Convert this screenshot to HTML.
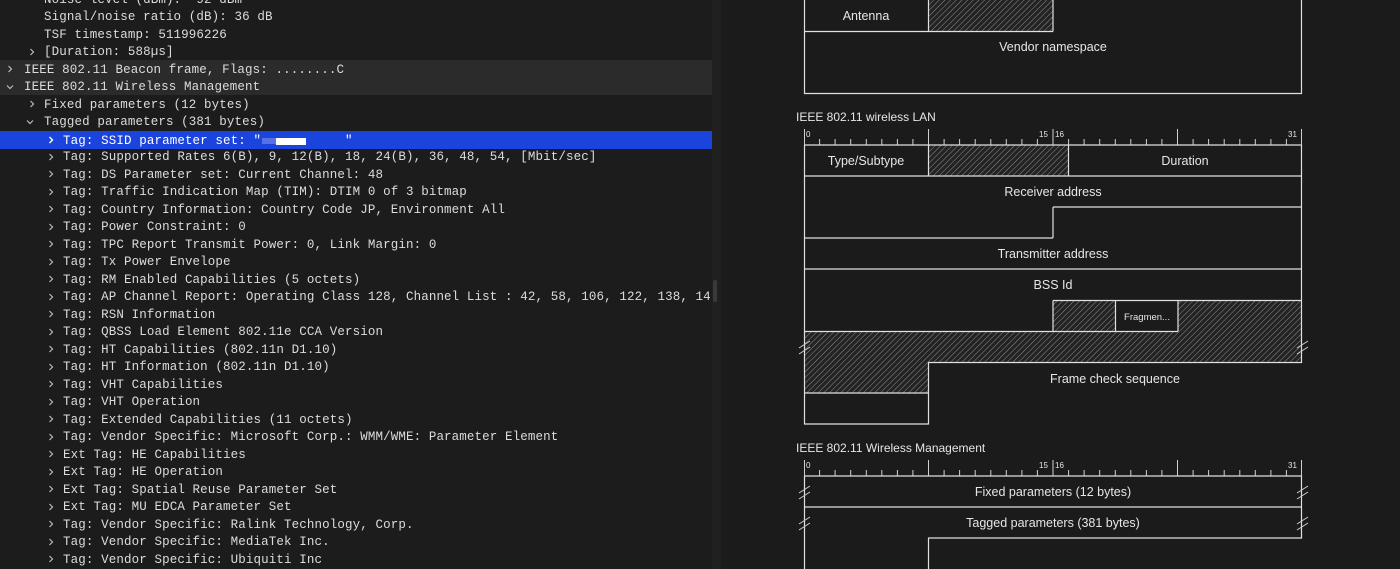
<!DOCTYPE html>
<html><head><meta charset="utf-8"><style>
html,body{margin:0;padding:0;}
body{width:1400px;height:569px;overflow:hidden;background:#1b1b1b;position:relative;}
#left{position:absolute;left:0;top:0;width:712px;height:569px;background:#1c1c1c;overflow:hidden;}
#sep{position:absolute;left:712px;top:0;width:9px;height:569px;background:#202020;}
.r{position:absolute;left:0;width:712px;height:17.5px;line-height:17.5px;font-family:"Liberation Mono",monospace;font-size:12.5px;letter-spacing:0.12px;color:#dcdcdc;white-space:pre;}
.r span.t{position:absolute;top:1.5px;}
.bg{background:#2b2b2b;}
.sel{background:#1b44dc;color:#fff;}
.ar{position:absolute;top:5px;width:8px;height:8px;}
svg text{font-family:"Liberation Sans",sans-serif;fill:#e6e6e6;}
</style></head><body>
<div id="left">
<div class="r" style="top:-10px"><span class="t" style="left:44px">Noise level (dBm): -92 dBm</span></div>
<div class="r" style="top:7.5px"><span class="t" style="left:44px">Signal/noise ratio (dB): 36 dB</span></div>
<div class="r" style="top:25px"><span class="t" style="left:44px">TSF timestamp: 511996226</span></div>
<div class="r" style="top:42.5px"><svg class="ar" style="left:28px" viewBox="0 0 8 8"><path d="M2.5 1 L5.5 4 L2.5 7" stroke="#bbb" stroke-width="1.2" fill="none"/></svg><span class="t" style="left:44px">[Duration: 588µs]</span></div>
<div class="r bg" style="top:60px"><svg class="ar" style="left:6px" viewBox="0 0 8 8"><path d="M2.5 1 L5.5 4 L2.5 7" stroke="#bbb" stroke-width="1.2" fill="none"/></svg><span class="t" style="left:24px">IEEE 802.11 Beacon frame, Flags: ........C</span></div>
<div class="r bg" style="top:77.5px"><svg class="ar" style="left:6px" viewBox="0 0 8 8"><path d="M1 2.5 L4 5.5 L7 2.5" stroke="#bbb" stroke-width="1.2" fill="none"/></svg><span class="t" style="left:24px">IEEE 802.11 Wireless Management</span></div>
<div class="r" style="top:95px"><svg class="ar" style="left:28px" viewBox="0 0 8 8"><path d="M2.5 1 L5.5 4 L2.5 7" stroke="#bbb" stroke-width="1.2" fill="none"/></svg><span class="t" style="left:44px">Fixed parameters (12 bytes)</span></div>
<div class="r" style="top:112.5px"><svg class="ar" style="left:26px" viewBox="0 0 8 8"><path d="M1 2.5 L4 5.5 L7 2.5" stroke="#bbb" stroke-width="1.2" fill="none"/></svg><span class="t" style="left:44px">Tagged parameters (381 bytes)</span></div>
<div class="r sel" style="top:131px"><svg class="ar" style="left:47px" viewBox="0 0 8 8"><path d="M2.5 1 L5.5 4 L2.5 7" stroke="#fff" stroke-width="1.4" fill="none"/></svg><span class="t" style="left:63px">Tag: SSID parameter set: "           "</span><span style="position:absolute;left:262px;top:7px;width:14px;height:6px;background:#8aa0ee;opacity:.5"></span><span style="position:absolute;left:276px;top:7px;width:30px;height:7px;background:#fff"></span></div>
<div id="tags"></div>
</div>
<div id="sep"></div>
<div style="position:absolute;left:713px;top:280px;width:4px;height:22px;background:#3a3a3a;border-radius:2px"></div>
<script>
var tags=["Tag: Supported Rates 6(B), 9, 12(B), 18, 24(B), 36, 48, 54, [Mbit/sec]","Tag: DS Parameter set: Current Channel: 48","Tag: Traffic Indication Map (TIM): DTIM 0 of 3 bitmap","Tag: Country Information: Country Code JP, Environment All","Tag: Power Constraint: 0","Tag: TPC Report Transmit Power: 0, Link Margin: 0","Tag: Tx Power Envelope","Tag: RM Enabled Capabilities (5 octets)","Tag: AP Channel Report: Operating Class 128, Channel List : 42, 58, 106, 122, 138, 14","Tag: RSN Information","Tag: QBSS Load Element 802.11e CCA Version","Tag: HT Capabilities (802.11n D1.10)","Tag: HT Information (802.11n D1.10)","Tag: VHT Capabilities","Tag: VHT Operation","Tag: Extended Capabilities (11 octets)","Tag: Vendor Specific: Microsoft Corp.: WMM/WME: Parameter Element","Ext Tag: HE Capabilities","Ext Tag: HE Operation","Ext Tag: Spatial Reuse Parameter Set","Ext Tag: MU EDCA Parameter Set","Tag: Vendor Specific: Ralink Technology, Corp.","Tag: Vendor Specific: MediaTek Inc.","Tag: Vendor Specific: Ubiquiti Inc"];
var h="";tags.forEach(function(t,i){var top=-10+17.5*(9+i);h+='<div class="r" style="top:'+top+'px"><svg class="ar" style="left:47px" viewBox="0 0 8 8"><path d="M2.5 1 L5.5 4 L2.5 7" stroke="#bbb" stroke-width="1.2" fill="none"/></svg><span class="t" style="left:63px">'+t.replace(/&/g,'&amp;')+'</span></div>';});
document.getElementById('tags').outerHTML=h;
</script>
<svg style="position:absolute;left:0;top:0" width="1400" height="569" viewBox="0 0 1400 569">
<defs>
<pattern id="hp" width="4" height="4" patternUnits="userSpaceOnUse" patternTransform="rotate(45)">
<rect width="4" height="4" fill="#232323"/><line x1="0" y1="0" x2="0" y2="4" stroke="#9a9a9a" stroke-width="0.9"/>
</pattern>
<g id="ruler" stroke="#d0d0d0" stroke-width="1" fill="none">
<path d="M804.5 0V16M928.5 0V16M1053 0V16M1177.5 0V16M1301.5 0V16 M819.6 10V16M835.1 10V16M850.7 10V16M866.3 10V16M881.8 10V16M897.4 10V16M912.9 10V16M944.1 10V16M959.6 10V16M975.2 10V16M990.8 10V16M1006.3 10V16M1021.9 10V16M1037.4 10V16M1068.6 10V16M1084.1 10V16M1099.7 10V16M1115.3 10V16M1130.8 10V16M1146.4 10V16M1161.9 10V16M1193.1 10V16M1208.6 10V16M1224.2 10V16M1239.8 10V16M1255.3 10V16M1270.9 10V16M1286.4 10V16"/>
</g>
</defs>
<rect x="928.5" y="0" width="124.5" height="31" fill="url(#hp)"/>
<g stroke="#e0e0e0" stroke-width="1.2" fill="none">
<path d="M804.5 0V93.5H1301.5V0"/>
<path d="M804.5 31.5H1053M928.5 0V31.5M1053 0V31.5"/>
</g>
<text x="866" y="20" font-size="12.5" text-anchor="middle">Antenna</text>
<text x="1053" y="51" font-size="12.5" text-anchor="middle">Vendor namespace</text>

<text x="796" y="121" font-size="12">IEEE 802.11 wireless LAN</text>
<use href="#ruler" transform="translate(0,129)"/>
<g font-size="8"><text x="806" y="137">0</text><text x="1039" y="137">15</text><text x="1055" y="137">16</text><text x="1288" y="137">31</text></g>
<rect x="928.5" y="145" width="140" height="31" fill="url(#hp)"/>
<rect x="1053" y="300.5" width="62" height="31" fill="url(#hp)"/>
<rect x="1178" y="300.5" width="124" height="31" fill="url(#hp)"/>
<rect x="804.5" y="331.5" width="497" height="31" fill="url(#hp)"/>
<rect x="804.5" y="362" width="124" height="31" fill="url(#hp)"/>
<g stroke="#e0e0e0" stroke-width="1.2" fill="none">
<path d="M804.5 145H1301.5M804.5 145V424H928.5V362.5H1301.5V145"/>
<path d="M804.5 176H1301.5M928.5 145V176M1068.5 145V176"/>
<path d="M1053 207H1301.5M1053 207V238M804.5 238H1053"/>
<path d="M804.5 269H1301.5"/>
<path d="M1053 300.5H1301.5M1053 300.5V331.5M804.5 331.5H1178M1115.5 300.5V331.5M1178 300.5V331.5"/>
<path d="M804.5 393H928.5"/>
</g>
<g stroke="#d0d0d0" stroke-width="1"><path d="M799 348L810 341M799 354L810 347M1297 348L1308 341M1297 354L1308 347"/></g>
<text x="866" y="165" font-size="12.5" text-anchor="middle">Type/Subtype</text>
<text x="1185" y="165" font-size="12.5" text-anchor="middle">Duration</text>
<text x="1053" y="196" font-size="12.5" text-anchor="middle">Receiver address</text>
<text x="1053" y="258" font-size="12.5" text-anchor="middle">Transmitter address</text>
<text x="1053" y="289" font-size="12.5" text-anchor="middle">BSS Id</text>
<text x="1147" y="320" font-size="9.5" text-anchor="middle">Fragmen...</text>
<text x="1115" y="383" font-size="12.5" text-anchor="middle">Frame check sequence</text>

<text x="796" y="452" font-size="12">IEEE 802.11 Wireless Management</text>
<use href="#ruler" transform="translate(0,460)"/>
<g font-size="8"><text x="806" y="468">0</text><text x="1039" y="468">15</text><text x="1055" y="468">16</text><text x="1288" y="468">31</text></g>
<g stroke="#e0e0e0" stroke-width="1.2" fill="none">
<path d="M804.5 476H1301.5V538H928.5V569M804.5 476V569M804.5 507H1301.5"/>
</g>
<g stroke="#d0d0d0" stroke-width="1"><path d="M799 493L810 486M799 499L810 492M1297 493L1308 486M1297 499L1308 492M799 524L810 517M799 530L810 523M1297 524L1308 517M1297 530L1308 523"/></g>
<text x="1053" y="496" font-size="12.5" text-anchor="middle">Fixed parameters (12 bytes)</text>
<text x="1053" y="527" font-size="12.5" text-anchor="middle">Tagged parameters (381 bytes)</text>
</svg>
</body></html>
